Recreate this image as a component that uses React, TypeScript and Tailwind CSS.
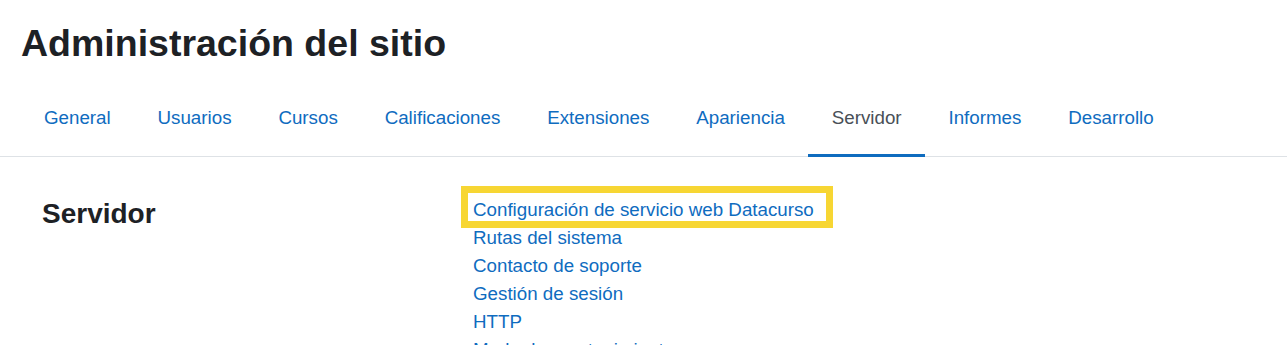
import React from 'react';

const tabs = [
  'General',
  'Usuarios',
  'Cursos',
  'Calificaciones',
  'Extensiones',
  'Apariencia',
  'Servidor',
  'Informes',
  'Desarrollo',
];

const links = [
  'Configuración de servicio web Datacurso',
  'Rutas del sistema',
  'Contacto de soporte',
  'Gestión de sesión',
  'HTTP',
  'Modo de mantenimiento',
  'Limpieza',
  'Entorno',
];

const App: React.FC = () => {
  return (
    <div className="min-h-screen bg-white text-[#1d2125] font-['Liberation_Sans',Arial,sans-serif]">
      {/* Page title */}
      <div className="px-[21px] pt-[21px]">
        <h1 className="text-[37.5px] font-bold leading-[1.2]">Administración del sitio</h1>
      </div>

      {/* Tabs */}
      <nav className="mt-[16px] border-b border-[#dee2e6]">
        <ul className="flex pl-[20.5px]">
          {tabs.map((tab) => {
            const active = tab === 'Servidor';
            return (
              <li key={tab} className="-mb-px">
                <a
                  href="#"
                  className={
                    active
                      ? 'block px-[23.45px] pt-[22px] pb-[22px] text-[18.75px] leading-[28px] text-[#495057] border-b-[3px] border-[#0f6cbf]'
                      : 'block px-[23.45px] pt-[22px] pb-[22px] text-[18.75px] leading-[28px] text-[#0f6cbf] border-b-[3px] border-transparent'
                  }
                >
                  {tab}
                </a>
              </li>
            );
          })}
        </ul>
      </nav>

      {/* Category content */}
      <div className="grid grid-cols-[431px_1fr] pl-[42px] mt-[39px]">
        <h2 className="text-[28px] font-bold leading-[1.2] mt-px">Servidor</h2>
        <ul className="text-[18.75px] leading-[28.1px]">
          {links.map((link, i) => (
            <li key={link}>
              <a href="#" className="relative text-[#0f6cbf]">
                {i === 0 && (
                  <span className="pointer-events-none absolute left-[-12px] top-[-13px] w-[372px] h-[42px] border-[7px] border-[#f7d633]" />
                )}
                {link}
              </a>
            </li>
          ))}
        </ul>
      </div>
    </div>
  );
};

export default App;
